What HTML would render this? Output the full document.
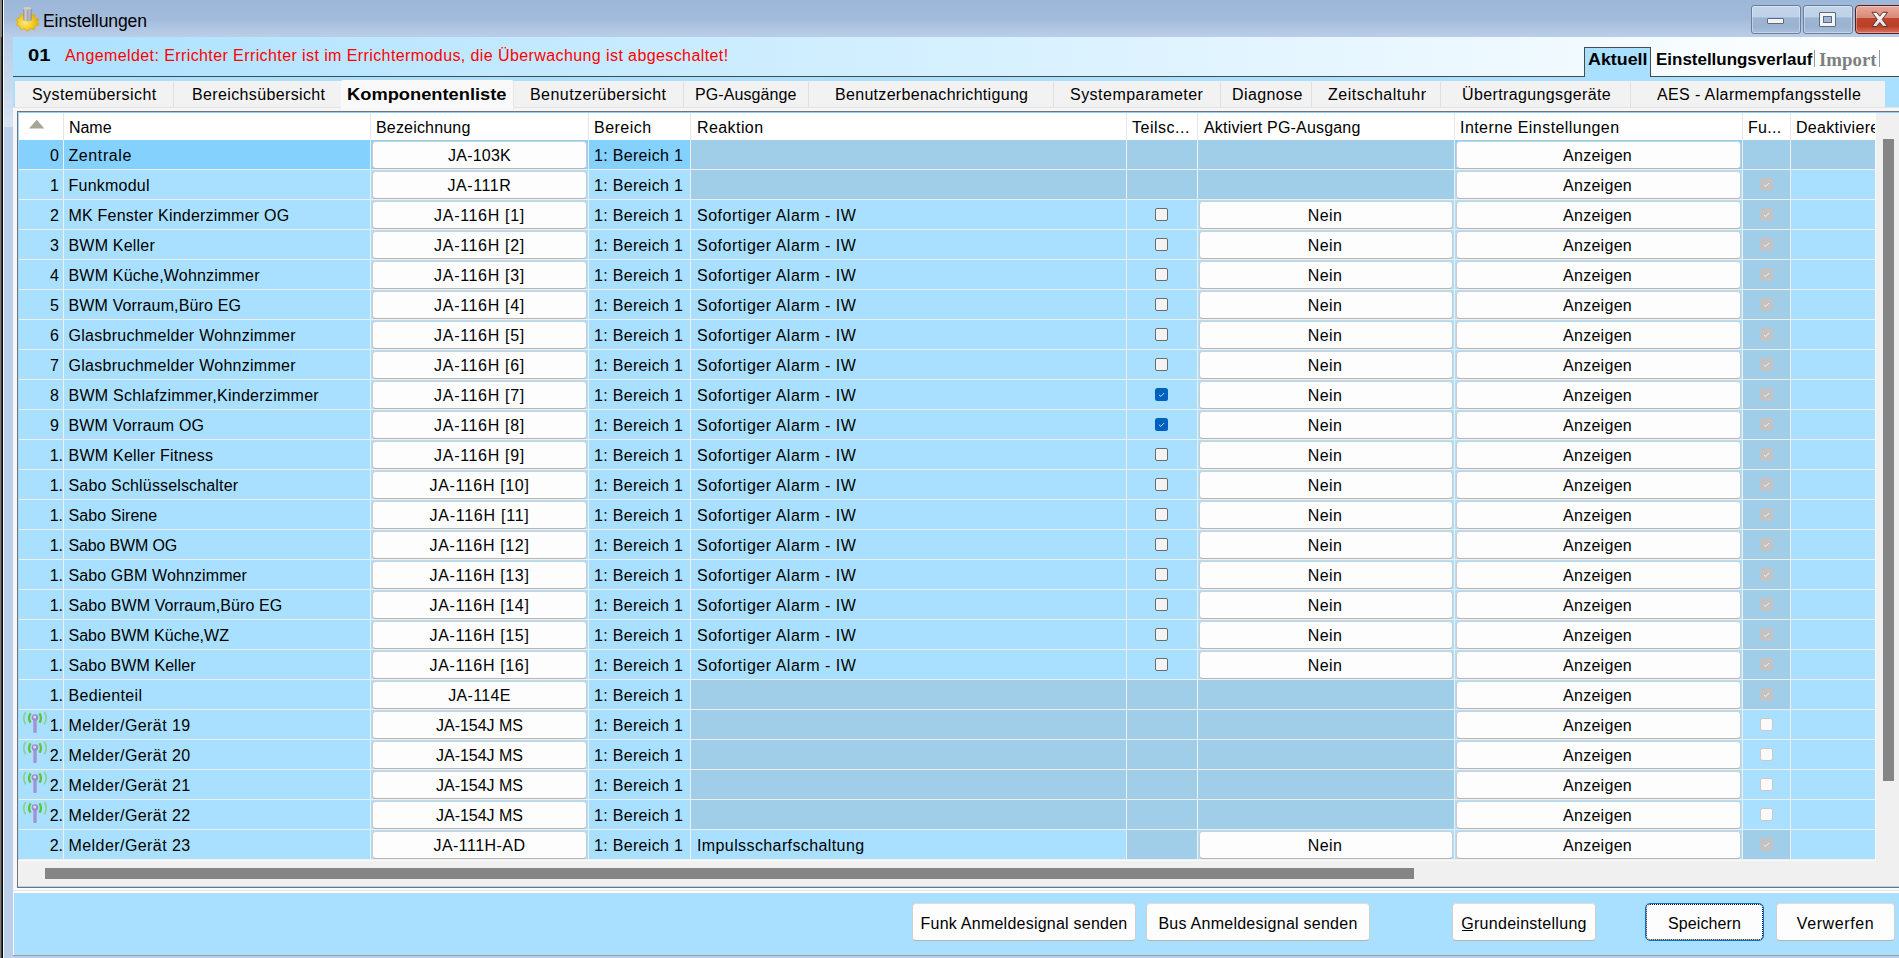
<!DOCTYPE html>
<html><head><meta charset="utf-8"><title>Einstellungen</title>
<style>
html,body{margin:0;padding:0;overflow:hidden;}
body{width:1899px;height:958px;overflow:hidden;position:relative;background:#a9e0ff;font-family:"Liberation Sans", sans-serif;font-size:16px;color:#000;}
div{white-space:nowrap;}
</style></head><body>
<div style="position:absolute;left:0px;top:0px;width:1899px;height:958px;background:#bad0ea;"></div>
<div style="position:absolute;left:0px;top:0px;width:1899px;height:127px;background:linear-gradient(#9db7d8 0px,#a2bbdb 18px,#bacee8 37px,#d6e3f2 126px);"></div>
<div style="position:absolute;left:0px;top:0px;width:1px;height:958px;background:#7e7e7e;"></div>
<div style="position:absolute;left:1px;top:0px;width:1px;height:958px;background:#3a3a3a;"></div>
<div style="position:absolute;left:2px;top:0px;width:1px;height:958px;background:#050505;"></div>
<div style="position:absolute;left:0px;top:0px;width:1px;height:37px;background:#8c8c8c;"></div>
<div style="position:absolute;left:1px;top:0px;width:1px;height:37px;background:#808080;"></div>
<div style="position:absolute;left:3px;top:0px;width:1px;height:958px;background:#fbfcfd;"></div>
<svg style="position:absolute;left:14px;top:5px" width="28" height="28" viewBox="0 0 28 28">
<defs><radialGradient id="gg" cx="0.4" cy="0.55" r="0.65"><stop offset="0" stop-color="#fbe88a"/><stop offset="0.45" stop-color="#f7d128"/><stop offset="1" stop-color="#d3a714"/></radialGradient>
<linearGradient id="cg" x1="0" x2="1"><stop offset="0" stop-color="#8f8f96"/><stop offset="0.28" stop-color="#d2d0d5"/><stop offset="0.5" stop-color="#a6a6ae"/><stop offset="0.75" stop-color="#b9b9c2"/><stop offset="1" stop-color="#8c8c94"/></linearGradient></defs>
<path d="M11.67 9.66 L12.19 8.16 L14.81 8.16 L15.33 9.66 L17.65 10.24 L19.22 9.26 L21.33 10.44 L20.60 11.88 L22.04 13.40 L24.06 13.31 L24.87 15.22 L23.17 16.06 L23.17 17.94 L24.87 18.78 L24.06 20.69 L22.04 20.60 L20.60 22.12 L21.33 23.56 L19.22 24.74 L17.65 23.76 L15.33 24.34 L14.81 25.84 L12.19 25.84 L11.67 24.34 L9.35 23.76 L7.78 24.74 L5.67 23.56 L6.40 22.12 L4.96 20.60 L2.94 20.69 L2.13 18.78 L3.83 17.94 L3.83 16.06 L2.13 15.22 L2.94 13.31 L4.96 13.40 L6.40 11.88 L5.67 10.44 L7.78 9.26 L9.35 10.24 Z" fill="url(#gg)" stroke="#d8ad18" stroke-width="0.7" stroke-linejoin="round"/>
<path d="M9.2 3.2 Q9.2 2 13.5 2 Q17.8 2 17.8 3.2 L17.8 14.6 Q17.8 16.3 13.5 16.3 Q9.2 16.3 9.2 14.6 Z" fill="url(#cg)"/>
<ellipse cx="13.5" cy="3.3" rx="4.3" ry="1.3" fill="#cfcdd2"/>
</svg>
<div style="position:absolute;top:6px;height:30px;line-height:30px;font-size:17.6px;color:#000;white-space:pre;left:43px;letter-spacing:-0.134px;">Einstellungen</div>
<div style="position:absolute;left:1751px;top:5px;width:50px;height:29px;box-sizing:border-box;border:1px solid #6b7f9a;border-radius:3px;background:linear-gradient(#c2d5ea 0%,#bdd1e8 42%,#9db4d2 43%,#9bb3d1 78%,#a9c0dc 100%);box-shadow:inset 0 0 0 1px rgba(255,255,255,0.35)"></div>
<div style="position:absolute;left:1803px;top:5px;width:50px;height:29px;box-sizing:border-box;border:1px solid #6b7f9a;border-radius:3px;background:linear-gradient(#c2d5ea 0%,#bdd1e8 42%,#9db4d2 43%,#9bb3d1 78%,#a9c0dc 100%);box-shadow:inset 0 0 0 1px rgba(255,255,255,0.35)"></div>
<div style="position:absolute;left:1855px;top:5px;width:60px;height:29px;box-sizing:border-box;border:1px solid #5a1f1c;border-radius:4px 0 0 4px;background:linear-gradient(#e8a99b 0%,#d98876 45%,#c0452d 46%,#bb3f27 75%,#d7745f 100%);box-shadow:inset 0 0 0 1px rgba(255,255,255,0.35)"></div>
<div style="position:absolute;left:1767px;top:18px;width:17px;height:6px;box-sizing:border-box;background:#f4f4f4;border:1px solid #5c6a80;border-radius:1px"></div>
<div style="position:absolute;left:1819px;top:12px;width:17px;height:15px;box-sizing:border-box;border:1px solid #5c6a80;background:#f4f4f4;border-radius:1px"></div>
<div style="position:absolute;left:1823px;top:16px;width:9px;height:7px;box-sizing:border-box;border:1px solid #5c6a80;background:#9fb6d4"></div>
<svg style="position:absolute;left:1868px;top:9px" width="24" height="22" viewBox="0 0 24 22"><defs><linearGradient id="xg" x1="0" y1="0" x2="0" y2="1"><stop offset="0" stop-color="#ffffff"/><stop offset="1" stop-color="#dcdcdc"/></linearGradient></defs><path d="M4 3.3 L8.6 3.3 L11.75 7.2 L14.9 3.3 L19.5 3.3 L14.2 10.4 L19.5 17.5 L14.9 17.5 L11.75 13.6 L8.6 17.5 L4 17.5 L9.3 10.4 Z" fill="url(#xg)" stroke="#5d3434" stroke-width="1" stroke-linejoin="round"/></svg>
<div style="position:absolute;left:13px;top:37px;width:1886px;height:39px;background:linear-gradient(90deg,#ace1ff 0%,#ffffff 100%);"></div>
<div style="position:absolute;left:13px;top:76px;width:1886px;height:1px;background:#4a4a4a;"></div>
<div style="position:absolute;left:13px;top:77px;width:1886px;height:881px;background:#a9e0ff;"></div>
<div style="position:absolute;top:41px;height:30px;line-height:30px;font-size:16px;color:#000;white-space:pre;font-weight:bold;left:28px;transform:scaleX(1.2643);transform-origin:0 0;">01</div>
<div style="position:absolute;top:41px;height:30px;line-height:30px;font-size:16px;color:#ff0000;white-space:pre;left:65px;letter-spacing:0.406px;">Angemeldet: Errichter Errichter ist im Errichtermodus, die Überwachung ist abgeschaltet!</div>
<div style="position:absolute;left:1584px;top:47px;width:67px;height:30px;box-sizing:border-box;border:1px solid #4a4a4a;border-bottom:none;background:#a9e0ff"></div>
<div style="position:absolute;top:45px;height:30px;line-height:30px;font-size:16px;color:#000;white-space:pre;font-weight:bold;left:1588px;transform:scaleX(1.1154);transform-origin:0 0;">Aktuell</div>
<div style="position:absolute;top:45px;height:30px;line-height:30px;font-size:16px;color:#000;white-space:pre;font-weight:bold;left:1656px;transform:scaleX(1.0597);transform-origin:0 0;">Einstellungsverlauf</div>
<div style="position:absolute;left:1814px;top:50px;width:1px;height:17px;background:#9a9a9a;"></div>
<div style="position:absolute;top:45px;height:30px;line-height:30px;font-size:18px;color:#7f7f7f;white-space:pre;font-family:'Liberation Serif', serif;font-weight:bold;left:1819px;transform:scaleX(1.0455);transform-origin:0 0;">Import</div>
<div style="position:absolute;left:1879px;top:50px;width:1px;height:17px;background:#9a9a9a;"></div>
<div style="position:absolute;left:15px;top:81px;width:1870px;height:26px;background:#f2f2f2;"></div>
<div style="position:absolute;top:80px;height:30px;line-height:30px;font-size:16px;color:#000;white-space:pre;left:32px;letter-spacing:0.422px;">Systemübersicht</div>
<div style="position:absolute;left:173px;top:82px;width:1px;height:25px;background:#e0e0e0;"></div>
<div style="position:absolute;top:80px;height:30px;line-height:30px;font-size:16px;color:#000;white-space:pre;left:192px;letter-spacing:0.366px;">Bereichsübersicht</div>
<div style="position:absolute;top:80px;height:30px;line-height:30px;font-size:16px;color:#000;white-space:pre;font-weight:bold;left:348px;transform:scaleX(1.1407);transform-origin:0 0;">Komponentenliste</div>
<div style="position:absolute;left:513px;top:82px;width:1px;height:25px;background:#e0e0e0;"></div>
<div style="position:absolute;top:80px;height:30px;line-height:30px;font-size:16px;color:#000;white-space:pre;left:530px;letter-spacing:0.443px;">Benutzerübersicht</div>
<div style="position:absolute;left:683px;top:82px;width:1px;height:25px;background:#e0e0e0;"></div>
<div style="position:absolute;top:80px;height:30px;line-height:30px;font-size:16px;color:#000;white-space:pre;left:695px;letter-spacing:0.099px;">PG-Ausgänge</div>
<div style="position:absolute;left:808px;top:82px;width:1px;height:25px;background:#e0e0e0;"></div>
<div style="position:absolute;top:80px;height:30px;line-height:30px;font-size:16px;color:#000;white-space:pre;left:835px;letter-spacing:0.308px;">Benutzerbenachrichtigung</div>
<div style="position:absolute;left:1053px;top:82px;width:1px;height:25px;background:#e0e0e0;"></div>
<div style="position:absolute;top:80px;height:30px;line-height:30px;font-size:16px;color:#000;white-space:pre;left:1070px;letter-spacing:0.476px;">Systemparameter</div>
<div style="position:absolute;left:1220px;top:82px;width:1px;height:25px;background:#e0e0e0;"></div>
<div style="position:absolute;top:80px;height:30px;line-height:30px;font-size:16px;color:#000;white-space:pre;left:1232px;letter-spacing:0.386px;">Diagnose</div>
<div style="position:absolute;left:1311px;top:82px;width:1px;height:25px;background:#e0e0e0;"></div>
<div style="position:absolute;top:80px;height:30px;line-height:30px;font-size:16px;color:#000;white-space:pre;left:1328px;letter-spacing:0.539px;">Zeitschaltuhr</div>
<div style="position:absolute;left:1440px;top:82px;width:1px;height:25px;background:#e0e0e0;"></div>
<div style="position:absolute;top:80px;height:30px;line-height:30px;font-size:16px;color:#000;white-space:pre;left:1462px;letter-spacing:0.377px;">Übertragungsgeräte</div>
<div style="position:absolute;left:1630px;top:82px;width:1px;height:25px;background:#e0e0e0;"></div>
<div style="position:absolute;top:80px;height:30px;line-height:30px;font-size:16px;color:#000;white-space:pre;left:1657px;letter-spacing:0.378px;">AES - Alarmempfangsstelle</div>
<div style="position:absolute;left:13px;top:107px;width:1886px;height:4px;background:#f6f6f6;"></div>
<div style="position:absolute;left:13px;top:107px;width:4px;height:786px;background:#f7f7f7;"></div>
<div style="position:absolute;left:13px;top:107px;width:1886px;height:1px;background:#e3e3e3;"></div>
<div style="position:absolute;left:341px;top:80px;width:172px;height:30px;background:#f9f9f9;border-radius:2px 2px 0 0;box-shadow:1px 0 0 #e6e6e6;"></div>
<div style="position:absolute;top:80px;height:30px;line-height:30px;font-size:16px;color:#000;white-space:pre;font-weight:bold;left:347px;transform:scaleX(1.1429);transform-origin:0 0;">Komponentenliste</div>
<div style="position:absolute;left:17px;top:111px;width:1882px;height:777px;background:#f0f0f0;box-sizing:border-box;border:1px solid #6f737a;border-right:none;"></div>
<div style="position:absolute;left:18px;top:112px;width:1881px;height:1px;background:#8fd0fb;"></div>
<div style="position:absolute;left:18px;top:112px;width:1px;height:748px;background:#9bdafe;"></div>
<div style="position:absolute;left:18px;top:886px;width:1881px;height:1px;background:#a5d8f5;"></div>
<div style="position:absolute;left:19px;top:113px;width:1857px;height:27px;background:#ffffff;"></div>
<div style="position:absolute;left:63px;top:113px;width:1px;height:27px;background:#e5e5e5;"></div>
<div style="position:absolute;left:370px;top:113px;width:1px;height:27px;background:#e5e5e5;"></div>
<div style="position:absolute;left:588px;top:113px;width:1px;height:27px;background:#e5e5e5;"></div>
<div style="position:absolute;left:690px;top:113px;width:1px;height:27px;background:#e5e5e5;"></div>
<div style="position:absolute;left:1126px;top:113px;width:1px;height:27px;background:#e5e5e5;"></div>
<div style="position:absolute;left:1197px;top:113px;width:1px;height:27px;background:#e5e5e5;"></div>
<div style="position:absolute;left:1454px;top:113px;width:1px;height:27px;background:#e5e5e5;"></div>
<div style="position:absolute;left:1742px;top:113px;width:1px;height:27px;background:#e5e5e5;"></div>
<div style="position:absolute;left:1790px;top:113px;width:1px;height:27px;background:#e5e5e5;"></div>
<div style="position:absolute;top:113px;height:30px;line-height:30px;font-size:16px;color:#000;white-space:pre;left:69px;letter-spacing:-0.047px;">Name</div>
<div style="position:absolute;top:113px;height:30px;line-height:30px;font-size:16px;color:#000;white-space:pre;left:376px;letter-spacing:0.180px;">Bezeichnung</div>
<div style="position:absolute;top:113px;height:30px;line-height:30px;font-size:16px;color:#000;white-space:pre;left:594px;letter-spacing:0.464px;">Bereich</div>
<div style="position:absolute;top:113px;height:30px;line-height:30px;font-size:16px;color:#000;white-space:pre;left:697px;letter-spacing:0.418px;">Reaktion</div>
<div style="position:absolute;top:113px;height:30px;line-height:30px;font-size:16px;color:#000;white-space:pre;left:1132px;letter-spacing:0.517px;">Teilsc...</div>
<div style="position:absolute;top:113px;height:30px;line-height:30px;font-size:16px;color:#000;white-space:pre;left:1204px;letter-spacing:0.177px;">Aktiviert PG-Ausgang</div>
<div style="position:absolute;top:113px;height:30px;line-height:30px;font-size:16px;color:#000;white-space:pre;left:1460px;letter-spacing:0.437px;">Interne Einstellungen</div>
<div style="position:absolute;top:113px;height:30px;line-height:30px;font-size:16px;color:#000;white-space:pre;left:1748px;letter-spacing:0.297px;">Fu...</div>
<div style="position:absolute;top:113px;height:30px;line-height:30px;font-size:16px;color:#000;white-space:pre;left:1796px;letter-spacing:0.315px;width:79px;overflow:hidden;">Deaktiviere</div>
<svg style="position:absolute;left:28px;top:119px" width="18" height="10" viewBox="0 0 18 10"><path d="M1 9.4 L8.7 0.8 L16.4 9.4 Z" fill="#a8a699"/></svg>
<div style="position:absolute;left:19px;top:140px;width:1856px;height:29px;background:#84d1fe;"></div>
<div style="position:absolute;left:19px;top:169px;width:1856px;height:1px;background:#efefef;"></div>
<div style="position:absolute;left:691px;top:140px;width:763px;height:29px;background:#a0cee8;"></div>
<div style="position:absolute;left:1743px;top:140px;width:47px;height:29px;background:#a0cee8;"></div>
<div style="position:absolute;left:1791px;top:140px;width:84px;height:29px;background:#a0cee8;"></div>
<div style="position:absolute;top:141px;height:30px;line-height:30px;font-size:16px;color:#000;white-space:pre;left:19px;width:40px;text-align:right;">0</div>
<div style="position:absolute;top:141px;height:30px;line-height:30px;font-size:16px;color:#000;white-space:pre;left:68.5px;letter-spacing:0.600px;">Zentrale</div>
<div style="position:absolute;left:372px;top:141px;width:215px;height:28px;box-sizing:border-box;background:#fdfdfd;border:1px solid #cfcaca;border-radius:4px;border-top-color:#d4d0d0;border-bottom-color:#b8b5b5"></div>
<div style="position:absolute;top:141px;height:30px;line-height:30px;font-size:16px;color:#000;white-space:pre;left:372px;width:215px;text-align:center;letter-spacing:0.232px;">JA-103K</div>
<div style="position:absolute;top:141px;height:30px;line-height:30px;font-size:16px;color:#000;white-space:pre;left:594px;letter-spacing:0.317px;">1: Bereich 1</div>
<div style="position:absolute;left:1456px;top:141px;width:285px;height:28px;box-sizing:border-box;background:#fdfdfd;border:1px solid #cfcaca;border-radius:4px;border-top-color:#d4d0d0;border-bottom-color:#b8b5b5"></div>
<div style="position:absolute;top:141px;height:30px;line-height:30px;font-size:16px;color:#000;white-space:pre;left:1455px;width:285px;text-align:center;letter-spacing:0.285px;">Anzeigen</div>
<div style="position:absolute;left:19px;top:170px;width:1856px;height:29px;background:#a9e0ff;"></div>
<div style="position:absolute;left:19px;top:199px;width:1856px;height:1px;background:#efefef;"></div>
<div style="position:absolute;left:691px;top:170px;width:763px;height:29px;background:#a0cee8;"></div>
<div style="position:absolute;left:1743px;top:170px;width:47px;height:29px;background:#a0cee8;"></div>
<div style="position:absolute;top:171px;height:30px;line-height:30px;font-size:16px;color:#000;white-space:pre;left:19px;width:40px;text-align:right;">1</div>
<div style="position:absolute;top:171px;height:30px;line-height:30px;font-size:16px;color:#000;white-space:pre;left:68.5px;letter-spacing:0.227px;">Funkmodul</div>
<div style="position:absolute;left:372px;top:171px;width:215px;height:28px;box-sizing:border-box;background:#fdfdfd;border:1px solid #cfcaca;border-radius:4px;border-top-color:#d4d0d0;border-bottom-color:#b8b5b5"></div>
<div style="position:absolute;top:171px;height:30px;line-height:30px;font-size:16px;color:#000;white-space:pre;left:372px;width:215px;text-align:center;letter-spacing:0.589px;">JA-111R</div>
<div style="position:absolute;top:171px;height:30px;line-height:30px;font-size:16px;color:#000;white-space:pre;left:594px;letter-spacing:0.317px;">1: Bereich 1</div>
<div style="position:absolute;left:1456px;top:171px;width:285px;height:28px;box-sizing:border-box;background:#fdfdfd;border:1px solid #cfcaca;border-radius:4px;border-top-color:#d4d0d0;border-bottom-color:#b8b5b5"></div>
<div style="position:absolute;top:171px;height:30px;line-height:30px;font-size:16px;color:#000;white-space:pre;left:1455px;width:285px;text-align:center;letter-spacing:0.285px;">Anzeigen</div>
<div style="position:absolute;left:1760px;top:178px;width:13px;height:13px;background:#c3c3c3;border-radius:2.5px"></div><svg style="position:absolute;left:1760px;top:178px" width="13" height="13" viewBox="0 0 13 13"><path d="M4 6.8 L5.8 8.4 L9.2 5" stroke="#f0f0f0" stroke-width="1" fill="none"/></svg>
<div style="position:absolute;left:19px;top:200px;width:1856px;height:29px;background:#a9e0ff;"></div>
<div style="position:absolute;left:19px;top:229px;width:1856px;height:1px;background:#efefef;"></div>
<div style="position:absolute;left:1743px;top:200px;width:47px;height:29px;background:#a0cee8;"></div>
<div style="position:absolute;top:201px;height:30px;line-height:30px;font-size:16px;color:#000;white-space:pre;left:19px;width:40px;text-align:right;">2</div>
<div style="position:absolute;top:201px;height:30px;line-height:30px;font-size:16px;color:#000;white-space:pre;left:68.5px;letter-spacing:0.217px;">MK Fenster Kinderzimmer OG</div>
<div style="position:absolute;left:372px;top:201px;width:215px;height:28px;box-sizing:border-box;background:#fdfdfd;border:1px solid #cfcaca;border-radius:4px;border-top-color:#d4d0d0;border-bottom-color:#b8b5b5"></div>
<div style="position:absolute;top:201px;height:30px;line-height:30px;font-size:16px;color:#000;white-space:pre;left:372px;width:215px;text-align:center;letter-spacing:0.682px;">JA-116H [1]</div>
<div style="position:absolute;top:201px;height:30px;line-height:30px;font-size:16px;color:#000;white-space:pre;left:594px;letter-spacing:0.317px;">1: Bereich 1</div>
<div style="position:absolute;top:201px;height:30px;line-height:30px;font-size:16px;color:#000;white-space:pre;left:697px;letter-spacing:0.520px;">Sofortiger Alarm - IW</div>
<div style="position:absolute;left:1155px;top:208px;width:13px;height:13px;box-sizing:border-box;background:#f3f3f3;border:1px solid #6b6b6b;border-radius:2px"></div>
<div style="position:absolute;left:1199px;top:201px;width:254px;height:28px;box-sizing:border-box;background:#fdfdfd;border:1px solid #cfcaca;border-radius:4px;border-top-color:#d4d0d0;border-bottom-color:#b8b5b5"></div>
<div style="position:absolute;top:201px;height:30px;line-height:30px;font-size:16px;color:#000;white-space:pre;left:1198px;width:254px;text-align:center;letter-spacing:0.448px;">Nein</div>
<div style="position:absolute;left:1456px;top:201px;width:285px;height:28px;box-sizing:border-box;background:#fdfdfd;border:1px solid #cfcaca;border-radius:4px;border-top-color:#d4d0d0;border-bottom-color:#b8b5b5"></div>
<div style="position:absolute;top:201px;height:30px;line-height:30px;font-size:16px;color:#000;white-space:pre;left:1455px;width:285px;text-align:center;letter-spacing:0.285px;">Anzeigen</div>
<div style="position:absolute;left:1760px;top:208px;width:13px;height:13px;background:#c3c3c3;border-radius:2.5px"></div><svg style="position:absolute;left:1760px;top:208px" width="13" height="13" viewBox="0 0 13 13"><path d="M4 6.8 L5.8 8.4 L9.2 5" stroke="#f0f0f0" stroke-width="1" fill="none"/></svg>
<div style="position:absolute;left:19px;top:230px;width:1856px;height:29px;background:#a9e0ff;"></div>
<div style="position:absolute;left:19px;top:259px;width:1856px;height:1px;background:#efefef;"></div>
<div style="position:absolute;left:1743px;top:230px;width:47px;height:29px;background:#a0cee8;"></div>
<div style="position:absolute;top:231px;height:30px;line-height:30px;font-size:16px;color:#000;white-space:pre;left:19px;width:40px;text-align:right;">3</div>
<div style="position:absolute;top:231px;height:30px;line-height:30px;font-size:16px;color:#000;white-space:pre;left:68.5px;letter-spacing:0.195px;">BWM Keller</div>
<div style="position:absolute;left:372px;top:231px;width:215px;height:28px;box-sizing:border-box;background:#fdfdfd;border:1px solid #cfcaca;border-radius:4px;border-top-color:#d4d0d0;border-bottom-color:#b8b5b5"></div>
<div style="position:absolute;top:231px;height:30px;line-height:30px;font-size:16px;color:#000;white-space:pre;left:372px;width:215px;text-align:center;letter-spacing:0.682px;">JA-116H [2]</div>
<div style="position:absolute;top:231px;height:30px;line-height:30px;font-size:16px;color:#000;white-space:pre;left:594px;letter-spacing:0.317px;">1: Bereich 1</div>
<div style="position:absolute;top:231px;height:30px;line-height:30px;font-size:16px;color:#000;white-space:pre;left:697px;letter-spacing:0.520px;">Sofortiger Alarm - IW</div>
<div style="position:absolute;left:1155px;top:238px;width:13px;height:13px;box-sizing:border-box;background:#f3f3f3;border:1px solid #6b6b6b;border-radius:2px"></div>
<div style="position:absolute;left:1199px;top:231px;width:254px;height:28px;box-sizing:border-box;background:#fdfdfd;border:1px solid #cfcaca;border-radius:4px;border-top-color:#d4d0d0;border-bottom-color:#b8b5b5"></div>
<div style="position:absolute;top:231px;height:30px;line-height:30px;font-size:16px;color:#000;white-space:pre;left:1198px;width:254px;text-align:center;letter-spacing:0.448px;">Nein</div>
<div style="position:absolute;left:1456px;top:231px;width:285px;height:28px;box-sizing:border-box;background:#fdfdfd;border:1px solid #cfcaca;border-radius:4px;border-top-color:#d4d0d0;border-bottom-color:#b8b5b5"></div>
<div style="position:absolute;top:231px;height:30px;line-height:30px;font-size:16px;color:#000;white-space:pre;left:1455px;width:285px;text-align:center;letter-spacing:0.285px;">Anzeigen</div>
<div style="position:absolute;left:1760px;top:238px;width:13px;height:13px;background:#c3c3c3;border-radius:2.5px"></div><svg style="position:absolute;left:1760px;top:238px" width="13" height="13" viewBox="0 0 13 13"><path d="M4 6.8 L5.8 8.4 L9.2 5" stroke="#f0f0f0" stroke-width="1" fill="none"/></svg>
<div style="position:absolute;left:19px;top:260px;width:1856px;height:29px;background:#a9e0ff;"></div>
<div style="position:absolute;left:19px;top:289px;width:1856px;height:1px;background:#efefef;"></div>
<div style="position:absolute;left:1743px;top:260px;width:47px;height:29px;background:#a0cee8;"></div>
<div style="position:absolute;top:261px;height:30px;line-height:30px;font-size:16px;color:#000;white-space:pre;left:19px;width:40px;text-align:right;">4</div>
<div style="position:absolute;top:261px;height:30px;line-height:30px;font-size:16px;color:#000;white-space:pre;left:68.5px;letter-spacing:0.194px;">BWM Küche,Wohnzimmer</div>
<div style="position:absolute;left:372px;top:261px;width:215px;height:28px;box-sizing:border-box;background:#fdfdfd;border:1px solid #cfcaca;border-radius:4px;border-top-color:#d4d0d0;border-bottom-color:#b8b5b5"></div>
<div style="position:absolute;top:261px;height:30px;line-height:30px;font-size:16px;color:#000;white-space:pre;left:372px;width:215px;text-align:center;letter-spacing:0.682px;">JA-116H [3]</div>
<div style="position:absolute;top:261px;height:30px;line-height:30px;font-size:16px;color:#000;white-space:pre;left:594px;letter-spacing:0.317px;">1: Bereich 1</div>
<div style="position:absolute;top:261px;height:30px;line-height:30px;font-size:16px;color:#000;white-space:pre;left:697px;letter-spacing:0.520px;">Sofortiger Alarm - IW</div>
<div style="position:absolute;left:1155px;top:268px;width:13px;height:13px;box-sizing:border-box;background:#f3f3f3;border:1px solid #6b6b6b;border-radius:2px"></div>
<div style="position:absolute;left:1199px;top:261px;width:254px;height:28px;box-sizing:border-box;background:#fdfdfd;border:1px solid #cfcaca;border-radius:4px;border-top-color:#d4d0d0;border-bottom-color:#b8b5b5"></div>
<div style="position:absolute;top:261px;height:30px;line-height:30px;font-size:16px;color:#000;white-space:pre;left:1198px;width:254px;text-align:center;letter-spacing:0.448px;">Nein</div>
<div style="position:absolute;left:1456px;top:261px;width:285px;height:28px;box-sizing:border-box;background:#fdfdfd;border:1px solid #cfcaca;border-radius:4px;border-top-color:#d4d0d0;border-bottom-color:#b8b5b5"></div>
<div style="position:absolute;top:261px;height:30px;line-height:30px;font-size:16px;color:#000;white-space:pre;left:1455px;width:285px;text-align:center;letter-spacing:0.285px;">Anzeigen</div>
<div style="position:absolute;left:1760px;top:268px;width:13px;height:13px;background:#c3c3c3;border-radius:2.5px"></div><svg style="position:absolute;left:1760px;top:268px" width="13" height="13" viewBox="0 0 13 13"><path d="M4 6.8 L5.8 8.4 L9.2 5" stroke="#f0f0f0" stroke-width="1" fill="none"/></svg>
<div style="position:absolute;left:19px;top:290px;width:1856px;height:29px;background:#a9e0ff;"></div>
<div style="position:absolute;left:19px;top:319px;width:1856px;height:1px;background:#efefef;"></div>
<div style="position:absolute;left:1743px;top:290px;width:47px;height:29px;background:#a0cee8;"></div>
<div style="position:absolute;top:291px;height:30px;line-height:30px;font-size:16px;color:#000;white-space:pre;left:19px;width:40px;text-align:right;">5</div>
<div style="position:absolute;top:291px;height:30px;line-height:30px;font-size:16px;color:#000;white-space:pre;left:68.5px;letter-spacing:0.146px;">BWM Vorraum,Büro EG</div>
<div style="position:absolute;left:372px;top:291px;width:215px;height:28px;box-sizing:border-box;background:#fdfdfd;border:1px solid #cfcaca;border-radius:4px;border-top-color:#d4d0d0;border-bottom-color:#b8b5b5"></div>
<div style="position:absolute;top:291px;height:30px;line-height:30px;font-size:16px;color:#000;white-space:pre;left:372px;width:215px;text-align:center;letter-spacing:0.682px;">JA-116H [4]</div>
<div style="position:absolute;top:291px;height:30px;line-height:30px;font-size:16px;color:#000;white-space:pre;left:594px;letter-spacing:0.317px;">1: Bereich 1</div>
<div style="position:absolute;top:291px;height:30px;line-height:30px;font-size:16px;color:#000;white-space:pre;left:697px;letter-spacing:0.520px;">Sofortiger Alarm - IW</div>
<div style="position:absolute;left:1155px;top:298px;width:13px;height:13px;box-sizing:border-box;background:#f3f3f3;border:1px solid #6b6b6b;border-radius:2px"></div>
<div style="position:absolute;left:1199px;top:291px;width:254px;height:28px;box-sizing:border-box;background:#fdfdfd;border:1px solid #cfcaca;border-radius:4px;border-top-color:#d4d0d0;border-bottom-color:#b8b5b5"></div>
<div style="position:absolute;top:291px;height:30px;line-height:30px;font-size:16px;color:#000;white-space:pre;left:1198px;width:254px;text-align:center;letter-spacing:0.448px;">Nein</div>
<div style="position:absolute;left:1456px;top:291px;width:285px;height:28px;box-sizing:border-box;background:#fdfdfd;border:1px solid #cfcaca;border-radius:4px;border-top-color:#d4d0d0;border-bottom-color:#b8b5b5"></div>
<div style="position:absolute;top:291px;height:30px;line-height:30px;font-size:16px;color:#000;white-space:pre;left:1455px;width:285px;text-align:center;letter-spacing:0.285px;">Anzeigen</div>
<div style="position:absolute;left:1760px;top:298px;width:13px;height:13px;background:#c3c3c3;border-radius:2.5px"></div><svg style="position:absolute;left:1760px;top:298px" width="13" height="13" viewBox="0 0 13 13"><path d="M4 6.8 L5.8 8.4 L9.2 5" stroke="#f0f0f0" stroke-width="1" fill="none"/></svg>
<div style="position:absolute;left:19px;top:320px;width:1856px;height:29px;background:#a9e0ff;"></div>
<div style="position:absolute;left:19px;top:349px;width:1856px;height:1px;background:#efefef;"></div>
<div style="position:absolute;left:1743px;top:320px;width:47px;height:29px;background:#a0cee8;"></div>
<div style="position:absolute;top:321px;height:30px;line-height:30px;font-size:16px;color:#000;white-space:pre;left:19px;width:40px;text-align:right;">6</div>
<div style="position:absolute;top:321px;height:30px;line-height:30px;font-size:16px;color:#000;white-space:pre;left:68.5px;letter-spacing:0.272px;">Glasbruchmelder Wohnzimmer</div>
<div style="position:absolute;left:372px;top:321px;width:215px;height:28px;box-sizing:border-box;background:#fdfdfd;border:1px solid #cfcaca;border-radius:4px;border-top-color:#d4d0d0;border-bottom-color:#b8b5b5"></div>
<div style="position:absolute;top:321px;height:30px;line-height:30px;font-size:16px;color:#000;white-space:pre;left:372px;width:215px;text-align:center;letter-spacing:0.682px;">JA-116H [5]</div>
<div style="position:absolute;top:321px;height:30px;line-height:30px;font-size:16px;color:#000;white-space:pre;left:594px;letter-spacing:0.317px;">1: Bereich 1</div>
<div style="position:absolute;top:321px;height:30px;line-height:30px;font-size:16px;color:#000;white-space:pre;left:697px;letter-spacing:0.520px;">Sofortiger Alarm - IW</div>
<div style="position:absolute;left:1155px;top:328px;width:13px;height:13px;box-sizing:border-box;background:#f3f3f3;border:1px solid #6b6b6b;border-radius:2px"></div>
<div style="position:absolute;left:1199px;top:321px;width:254px;height:28px;box-sizing:border-box;background:#fdfdfd;border:1px solid #cfcaca;border-radius:4px;border-top-color:#d4d0d0;border-bottom-color:#b8b5b5"></div>
<div style="position:absolute;top:321px;height:30px;line-height:30px;font-size:16px;color:#000;white-space:pre;left:1198px;width:254px;text-align:center;letter-spacing:0.448px;">Nein</div>
<div style="position:absolute;left:1456px;top:321px;width:285px;height:28px;box-sizing:border-box;background:#fdfdfd;border:1px solid #cfcaca;border-radius:4px;border-top-color:#d4d0d0;border-bottom-color:#b8b5b5"></div>
<div style="position:absolute;top:321px;height:30px;line-height:30px;font-size:16px;color:#000;white-space:pre;left:1455px;width:285px;text-align:center;letter-spacing:0.285px;">Anzeigen</div>
<div style="position:absolute;left:1760px;top:328px;width:13px;height:13px;background:#c3c3c3;border-radius:2.5px"></div><svg style="position:absolute;left:1760px;top:328px" width="13" height="13" viewBox="0 0 13 13"><path d="M4 6.8 L5.8 8.4 L9.2 5" stroke="#f0f0f0" stroke-width="1" fill="none"/></svg>
<div style="position:absolute;left:19px;top:350px;width:1856px;height:29px;background:#a9e0ff;"></div>
<div style="position:absolute;left:19px;top:379px;width:1856px;height:1px;background:#efefef;"></div>
<div style="position:absolute;left:1743px;top:350px;width:47px;height:29px;background:#a0cee8;"></div>
<div style="position:absolute;top:351px;height:30px;line-height:30px;font-size:16px;color:#000;white-space:pre;left:19px;width:40px;text-align:right;">7</div>
<div style="position:absolute;top:351px;height:30px;line-height:30px;font-size:16px;color:#000;white-space:pre;left:68.5px;letter-spacing:0.272px;">Glasbruchmelder Wohnzimmer</div>
<div style="position:absolute;left:372px;top:351px;width:215px;height:28px;box-sizing:border-box;background:#fdfdfd;border:1px solid #cfcaca;border-radius:4px;border-top-color:#d4d0d0;border-bottom-color:#b8b5b5"></div>
<div style="position:absolute;top:351px;height:30px;line-height:30px;font-size:16px;color:#000;white-space:pre;left:372px;width:215px;text-align:center;letter-spacing:0.682px;">JA-116H [6]</div>
<div style="position:absolute;top:351px;height:30px;line-height:30px;font-size:16px;color:#000;white-space:pre;left:594px;letter-spacing:0.317px;">1: Bereich 1</div>
<div style="position:absolute;top:351px;height:30px;line-height:30px;font-size:16px;color:#000;white-space:pre;left:697px;letter-spacing:0.520px;">Sofortiger Alarm - IW</div>
<div style="position:absolute;left:1155px;top:358px;width:13px;height:13px;box-sizing:border-box;background:#f3f3f3;border:1px solid #6b6b6b;border-radius:2px"></div>
<div style="position:absolute;left:1199px;top:351px;width:254px;height:28px;box-sizing:border-box;background:#fdfdfd;border:1px solid #cfcaca;border-radius:4px;border-top-color:#d4d0d0;border-bottom-color:#b8b5b5"></div>
<div style="position:absolute;top:351px;height:30px;line-height:30px;font-size:16px;color:#000;white-space:pre;left:1198px;width:254px;text-align:center;letter-spacing:0.448px;">Nein</div>
<div style="position:absolute;left:1456px;top:351px;width:285px;height:28px;box-sizing:border-box;background:#fdfdfd;border:1px solid #cfcaca;border-radius:4px;border-top-color:#d4d0d0;border-bottom-color:#b8b5b5"></div>
<div style="position:absolute;top:351px;height:30px;line-height:30px;font-size:16px;color:#000;white-space:pre;left:1455px;width:285px;text-align:center;letter-spacing:0.285px;">Anzeigen</div>
<div style="position:absolute;left:1760px;top:358px;width:13px;height:13px;background:#c3c3c3;border-radius:2.5px"></div><svg style="position:absolute;left:1760px;top:358px" width="13" height="13" viewBox="0 0 13 13"><path d="M4 6.8 L5.8 8.4 L9.2 5" stroke="#f0f0f0" stroke-width="1" fill="none"/></svg>
<div style="position:absolute;left:19px;top:380px;width:1856px;height:29px;background:#a9e0ff;"></div>
<div style="position:absolute;left:19px;top:409px;width:1856px;height:1px;background:#efefef;"></div>
<div style="position:absolute;left:1743px;top:380px;width:47px;height:29px;background:#a0cee8;"></div>
<div style="position:absolute;top:381px;height:30px;line-height:30px;font-size:16px;color:#000;white-space:pre;left:19px;width:40px;text-align:right;">8</div>
<div style="position:absolute;top:381px;height:30px;line-height:30px;font-size:16px;color:#000;white-space:pre;left:68.5px;letter-spacing:0.265px;">BWM Schlafzimmer,Kinderzimmer</div>
<div style="position:absolute;left:372px;top:381px;width:215px;height:28px;box-sizing:border-box;background:#fdfdfd;border:1px solid #cfcaca;border-radius:4px;border-top-color:#d4d0d0;border-bottom-color:#b8b5b5"></div>
<div style="position:absolute;top:381px;height:30px;line-height:30px;font-size:16px;color:#000;white-space:pre;left:372px;width:215px;text-align:center;letter-spacing:0.682px;">JA-116H [7]</div>
<div style="position:absolute;top:381px;height:30px;line-height:30px;font-size:16px;color:#000;white-space:pre;left:594px;letter-spacing:0.317px;">1: Bereich 1</div>
<div style="position:absolute;top:381px;height:30px;line-height:30px;font-size:16px;color:#000;white-space:pre;left:697px;letter-spacing:0.520px;">Sofortiger Alarm - IW</div>
<div style="position:absolute;left:1155px;top:388px;width:13px;height:13px;background:#0060c0;border-radius:2.5px"></div><svg style="position:absolute;left:1155px;top:388px" width="13" height="13" viewBox="0 0 13 13"><path d="M4 6.8 L5.8 8.4 L9.2 5" stroke="#fff" stroke-width="0.9" stroke-opacity="0.9" fill="none"/></svg>
<div style="position:absolute;left:1199px;top:381px;width:254px;height:28px;box-sizing:border-box;background:#fdfdfd;border:1px solid #cfcaca;border-radius:4px;border-top-color:#d4d0d0;border-bottom-color:#b8b5b5"></div>
<div style="position:absolute;top:381px;height:30px;line-height:30px;font-size:16px;color:#000;white-space:pre;left:1198px;width:254px;text-align:center;letter-spacing:0.448px;">Nein</div>
<div style="position:absolute;left:1456px;top:381px;width:285px;height:28px;box-sizing:border-box;background:#fdfdfd;border:1px solid #cfcaca;border-radius:4px;border-top-color:#d4d0d0;border-bottom-color:#b8b5b5"></div>
<div style="position:absolute;top:381px;height:30px;line-height:30px;font-size:16px;color:#000;white-space:pre;left:1455px;width:285px;text-align:center;letter-spacing:0.285px;">Anzeigen</div>
<div style="position:absolute;left:1760px;top:388px;width:13px;height:13px;background:#c3c3c3;border-radius:2.5px"></div><svg style="position:absolute;left:1760px;top:388px" width="13" height="13" viewBox="0 0 13 13"><path d="M4 6.8 L5.8 8.4 L9.2 5" stroke="#f0f0f0" stroke-width="1" fill="none"/></svg>
<div style="position:absolute;left:19px;top:410px;width:1856px;height:29px;background:#a9e0ff;"></div>
<div style="position:absolute;left:19px;top:439px;width:1856px;height:1px;background:#efefef;"></div>
<div style="position:absolute;left:1743px;top:410px;width:47px;height:29px;background:#a0cee8;"></div>
<div style="position:absolute;top:411px;height:30px;line-height:30px;font-size:16px;color:#000;white-space:pre;left:19px;width:40px;text-align:right;">9</div>
<div style="position:absolute;top:411px;height:30px;line-height:30px;font-size:16px;color:#000;white-space:pre;left:68.5px;letter-spacing:0.167px;">BWM Vorraum OG</div>
<div style="position:absolute;left:372px;top:411px;width:215px;height:28px;box-sizing:border-box;background:#fdfdfd;border:1px solid #cfcaca;border-radius:4px;border-top-color:#d4d0d0;border-bottom-color:#b8b5b5"></div>
<div style="position:absolute;top:411px;height:30px;line-height:30px;font-size:16px;color:#000;white-space:pre;left:372px;width:215px;text-align:center;letter-spacing:0.682px;">JA-116H [8]</div>
<div style="position:absolute;top:411px;height:30px;line-height:30px;font-size:16px;color:#000;white-space:pre;left:594px;letter-spacing:0.317px;">1: Bereich 1</div>
<div style="position:absolute;top:411px;height:30px;line-height:30px;font-size:16px;color:#000;white-space:pre;left:697px;letter-spacing:0.520px;">Sofortiger Alarm - IW</div>
<div style="position:absolute;left:1155px;top:418px;width:13px;height:13px;background:#0060c0;border-radius:2.5px"></div><svg style="position:absolute;left:1155px;top:418px" width="13" height="13" viewBox="0 0 13 13"><path d="M4 6.8 L5.8 8.4 L9.2 5" stroke="#fff" stroke-width="0.9" stroke-opacity="0.9" fill="none"/></svg>
<div style="position:absolute;left:1199px;top:411px;width:254px;height:28px;box-sizing:border-box;background:#fdfdfd;border:1px solid #cfcaca;border-radius:4px;border-top-color:#d4d0d0;border-bottom-color:#b8b5b5"></div>
<div style="position:absolute;top:411px;height:30px;line-height:30px;font-size:16px;color:#000;white-space:pre;left:1198px;width:254px;text-align:center;letter-spacing:0.448px;">Nein</div>
<div style="position:absolute;left:1456px;top:411px;width:285px;height:28px;box-sizing:border-box;background:#fdfdfd;border:1px solid #cfcaca;border-radius:4px;border-top-color:#d4d0d0;border-bottom-color:#b8b5b5"></div>
<div style="position:absolute;top:411px;height:30px;line-height:30px;font-size:16px;color:#000;white-space:pre;left:1455px;width:285px;text-align:center;letter-spacing:0.285px;">Anzeigen</div>
<div style="position:absolute;left:1760px;top:418px;width:13px;height:13px;background:#c3c3c3;border-radius:2.5px"></div><svg style="position:absolute;left:1760px;top:418px" width="13" height="13" viewBox="0 0 13 13"><path d="M4 6.8 L5.8 8.4 L9.2 5" stroke="#f0f0f0" stroke-width="1" fill="none"/></svg>
<div style="position:absolute;left:19px;top:440px;width:1856px;height:29px;background:#a9e0ff;"></div>
<div style="position:absolute;left:19px;top:469px;width:1856px;height:1px;background:#efefef;"></div>
<div style="position:absolute;left:1743px;top:440px;width:47px;height:29px;background:#a0cee8;"></div>
<div style="position:absolute;top:441px;height:30px;line-height:30px;font-size:16px;color:#000;white-space:pre;left:19px;width:44px;text-align:right;">1.</div>
<div style="position:absolute;top:441px;height:30px;line-height:30px;font-size:16px;color:#000;white-space:pre;left:68.5px;letter-spacing:0.235px;">BWM Keller Fitness</div>
<div style="position:absolute;left:372px;top:441px;width:215px;height:28px;box-sizing:border-box;background:#fdfdfd;border:1px solid #cfcaca;border-radius:4px;border-top-color:#d4d0d0;border-bottom-color:#b8b5b5"></div>
<div style="position:absolute;top:441px;height:30px;line-height:30px;font-size:16px;color:#000;white-space:pre;left:372px;width:215px;text-align:center;letter-spacing:0.682px;">JA-116H [9]</div>
<div style="position:absolute;top:441px;height:30px;line-height:30px;font-size:16px;color:#000;white-space:pre;left:594px;letter-spacing:0.317px;">1: Bereich 1</div>
<div style="position:absolute;top:441px;height:30px;line-height:30px;font-size:16px;color:#000;white-space:pre;left:697px;letter-spacing:0.520px;">Sofortiger Alarm - IW</div>
<div style="position:absolute;left:1155px;top:448px;width:13px;height:13px;box-sizing:border-box;background:#f3f3f3;border:1px solid #6b6b6b;border-radius:2px"></div>
<div style="position:absolute;left:1199px;top:441px;width:254px;height:28px;box-sizing:border-box;background:#fdfdfd;border:1px solid #cfcaca;border-radius:4px;border-top-color:#d4d0d0;border-bottom-color:#b8b5b5"></div>
<div style="position:absolute;top:441px;height:30px;line-height:30px;font-size:16px;color:#000;white-space:pre;left:1198px;width:254px;text-align:center;letter-spacing:0.448px;">Nein</div>
<div style="position:absolute;left:1456px;top:441px;width:285px;height:28px;box-sizing:border-box;background:#fdfdfd;border:1px solid #cfcaca;border-radius:4px;border-top-color:#d4d0d0;border-bottom-color:#b8b5b5"></div>
<div style="position:absolute;top:441px;height:30px;line-height:30px;font-size:16px;color:#000;white-space:pre;left:1455px;width:285px;text-align:center;letter-spacing:0.285px;">Anzeigen</div>
<div style="position:absolute;left:1760px;top:448px;width:13px;height:13px;background:#c3c3c3;border-radius:2.5px"></div><svg style="position:absolute;left:1760px;top:448px" width="13" height="13" viewBox="0 0 13 13"><path d="M4 6.8 L5.8 8.4 L9.2 5" stroke="#f0f0f0" stroke-width="1" fill="none"/></svg>
<div style="position:absolute;left:19px;top:470px;width:1856px;height:29px;background:#a9e0ff;"></div>
<div style="position:absolute;left:19px;top:499px;width:1856px;height:1px;background:#efefef;"></div>
<div style="position:absolute;left:1743px;top:470px;width:47px;height:29px;background:#a0cee8;"></div>
<div style="position:absolute;top:471px;height:30px;line-height:30px;font-size:16px;color:#000;white-space:pre;left:19px;width:44px;text-align:right;">1.</div>
<div style="position:absolute;top:471px;height:30px;line-height:30px;font-size:16px;color:#000;white-space:pre;left:68.5px;letter-spacing:0.154px;">Sabo Schlüsselschalter</div>
<div style="position:absolute;left:372px;top:471px;width:215px;height:28px;box-sizing:border-box;background:#fdfdfd;border:1px solid #cfcaca;border-radius:4px;border-top-color:#d4d0d0;border-bottom-color:#b8b5b5"></div>
<div style="position:absolute;top:471px;height:30px;line-height:30px;font-size:16px;color:#000;white-space:pre;left:372px;width:215px;text-align:center;letter-spacing:0.650px;">JA-116H [10]</div>
<div style="position:absolute;top:471px;height:30px;line-height:30px;font-size:16px;color:#000;white-space:pre;left:594px;letter-spacing:0.317px;">1: Bereich 1</div>
<div style="position:absolute;top:471px;height:30px;line-height:30px;font-size:16px;color:#000;white-space:pre;left:697px;letter-spacing:0.520px;">Sofortiger Alarm - IW</div>
<div style="position:absolute;left:1155px;top:478px;width:13px;height:13px;box-sizing:border-box;background:#f3f3f3;border:1px solid #6b6b6b;border-radius:2px"></div>
<div style="position:absolute;left:1199px;top:471px;width:254px;height:28px;box-sizing:border-box;background:#fdfdfd;border:1px solid #cfcaca;border-radius:4px;border-top-color:#d4d0d0;border-bottom-color:#b8b5b5"></div>
<div style="position:absolute;top:471px;height:30px;line-height:30px;font-size:16px;color:#000;white-space:pre;left:1198px;width:254px;text-align:center;letter-spacing:0.448px;">Nein</div>
<div style="position:absolute;left:1456px;top:471px;width:285px;height:28px;box-sizing:border-box;background:#fdfdfd;border:1px solid #cfcaca;border-radius:4px;border-top-color:#d4d0d0;border-bottom-color:#b8b5b5"></div>
<div style="position:absolute;top:471px;height:30px;line-height:30px;font-size:16px;color:#000;white-space:pre;left:1455px;width:285px;text-align:center;letter-spacing:0.285px;">Anzeigen</div>
<div style="position:absolute;left:1760px;top:478px;width:13px;height:13px;background:#c3c3c3;border-radius:2.5px"></div><svg style="position:absolute;left:1760px;top:478px" width="13" height="13" viewBox="0 0 13 13"><path d="M4 6.8 L5.8 8.4 L9.2 5" stroke="#f0f0f0" stroke-width="1" fill="none"/></svg>
<div style="position:absolute;left:19px;top:500px;width:1856px;height:29px;background:#a9e0ff;"></div>
<div style="position:absolute;left:19px;top:529px;width:1856px;height:1px;background:#efefef;"></div>
<div style="position:absolute;left:1743px;top:500px;width:47px;height:29px;background:#a0cee8;"></div>
<div style="position:absolute;top:501px;height:30px;line-height:30px;font-size:16px;color:#000;white-space:pre;left:19px;width:44px;text-align:right;">1.</div>
<div style="position:absolute;top:501px;height:30px;line-height:30px;font-size:16px;color:#000;white-space:pre;left:68.5px;letter-spacing:0.067px;">Sabo Sirene</div>
<div style="position:absolute;left:372px;top:501px;width:215px;height:28px;box-sizing:border-box;background:#fdfdfd;border:1px solid #cfcaca;border-radius:4px;border-top-color:#d4d0d0;border-bottom-color:#b8b5b5"></div>
<div style="position:absolute;top:501px;height:30px;line-height:30px;font-size:16px;color:#000;white-space:pre;left:372px;width:215px;text-align:center;letter-spacing:0.749px;">JA-116H [11]</div>
<div style="position:absolute;top:501px;height:30px;line-height:30px;font-size:16px;color:#000;white-space:pre;left:594px;letter-spacing:0.317px;">1: Bereich 1</div>
<div style="position:absolute;top:501px;height:30px;line-height:30px;font-size:16px;color:#000;white-space:pre;left:697px;letter-spacing:0.520px;">Sofortiger Alarm - IW</div>
<div style="position:absolute;left:1155px;top:508px;width:13px;height:13px;box-sizing:border-box;background:#f3f3f3;border:1px solid #6b6b6b;border-radius:2px"></div>
<div style="position:absolute;left:1199px;top:501px;width:254px;height:28px;box-sizing:border-box;background:#fdfdfd;border:1px solid #cfcaca;border-radius:4px;border-top-color:#d4d0d0;border-bottom-color:#b8b5b5"></div>
<div style="position:absolute;top:501px;height:30px;line-height:30px;font-size:16px;color:#000;white-space:pre;left:1198px;width:254px;text-align:center;letter-spacing:0.448px;">Nein</div>
<div style="position:absolute;left:1456px;top:501px;width:285px;height:28px;box-sizing:border-box;background:#fdfdfd;border:1px solid #cfcaca;border-radius:4px;border-top-color:#d4d0d0;border-bottom-color:#b8b5b5"></div>
<div style="position:absolute;top:501px;height:30px;line-height:30px;font-size:16px;color:#000;white-space:pre;left:1455px;width:285px;text-align:center;letter-spacing:0.285px;">Anzeigen</div>
<div style="position:absolute;left:1760px;top:508px;width:13px;height:13px;background:#c3c3c3;border-radius:2.5px"></div><svg style="position:absolute;left:1760px;top:508px" width="13" height="13" viewBox="0 0 13 13"><path d="M4 6.8 L5.8 8.4 L9.2 5" stroke="#f0f0f0" stroke-width="1" fill="none"/></svg>
<div style="position:absolute;left:19px;top:530px;width:1856px;height:29px;background:#a9e0ff;"></div>
<div style="position:absolute;left:19px;top:559px;width:1856px;height:1px;background:#efefef;"></div>
<div style="position:absolute;left:1743px;top:530px;width:47px;height:29px;background:#a0cee8;"></div>
<div style="position:absolute;top:531px;height:30px;line-height:30px;font-size:16px;color:#000;white-space:pre;left:19px;width:44px;text-align:right;">1.</div>
<div style="position:absolute;top:531px;height:30px;line-height:30px;font-size:16px;color:#000;white-space:pre;left:68.5px;letter-spacing:-0.150px;">Sabo BWM OG</div>
<div style="position:absolute;left:372px;top:531px;width:215px;height:28px;box-sizing:border-box;background:#fdfdfd;border:1px solid #cfcaca;border-radius:4px;border-top-color:#d4d0d0;border-bottom-color:#b8b5b5"></div>
<div style="position:absolute;top:531px;height:30px;line-height:30px;font-size:16px;color:#000;white-space:pre;left:372px;width:215px;text-align:center;letter-spacing:0.650px;">JA-116H [12]</div>
<div style="position:absolute;top:531px;height:30px;line-height:30px;font-size:16px;color:#000;white-space:pre;left:594px;letter-spacing:0.317px;">1: Bereich 1</div>
<div style="position:absolute;top:531px;height:30px;line-height:30px;font-size:16px;color:#000;white-space:pre;left:697px;letter-spacing:0.520px;">Sofortiger Alarm - IW</div>
<div style="position:absolute;left:1155px;top:538px;width:13px;height:13px;box-sizing:border-box;background:#f3f3f3;border:1px solid #6b6b6b;border-radius:2px"></div>
<div style="position:absolute;left:1199px;top:531px;width:254px;height:28px;box-sizing:border-box;background:#fdfdfd;border:1px solid #cfcaca;border-radius:4px;border-top-color:#d4d0d0;border-bottom-color:#b8b5b5"></div>
<div style="position:absolute;top:531px;height:30px;line-height:30px;font-size:16px;color:#000;white-space:pre;left:1198px;width:254px;text-align:center;letter-spacing:0.448px;">Nein</div>
<div style="position:absolute;left:1456px;top:531px;width:285px;height:28px;box-sizing:border-box;background:#fdfdfd;border:1px solid #cfcaca;border-radius:4px;border-top-color:#d4d0d0;border-bottom-color:#b8b5b5"></div>
<div style="position:absolute;top:531px;height:30px;line-height:30px;font-size:16px;color:#000;white-space:pre;left:1455px;width:285px;text-align:center;letter-spacing:0.285px;">Anzeigen</div>
<div style="position:absolute;left:1760px;top:538px;width:13px;height:13px;background:#c3c3c3;border-radius:2.5px"></div><svg style="position:absolute;left:1760px;top:538px" width="13" height="13" viewBox="0 0 13 13"><path d="M4 6.8 L5.8 8.4 L9.2 5" stroke="#f0f0f0" stroke-width="1" fill="none"/></svg>
<div style="position:absolute;left:19px;top:560px;width:1856px;height:29px;background:#a9e0ff;"></div>
<div style="position:absolute;left:19px;top:589px;width:1856px;height:1px;background:#efefef;"></div>
<div style="position:absolute;left:1743px;top:560px;width:47px;height:29px;background:#a0cee8;"></div>
<div style="position:absolute;top:561px;height:30px;line-height:30px;font-size:16px;color:#000;white-space:pre;left:19px;width:44px;text-align:right;">1.</div>
<div style="position:absolute;top:561px;height:30px;line-height:30px;font-size:16px;color:#000;white-space:pre;left:68.5px;letter-spacing:0.097px;">Sabo GBM Wohnzimmer</div>
<div style="position:absolute;left:372px;top:561px;width:215px;height:28px;box-sizing:border-box;background:#fdfdfd;border:1px solid #cfcaca;border-radius:4px;border-top-color:#d4d0d0;border-bottom-color:#b8b5b5"></div>
<div style="position:absolute;top:561px;height:30px;line-height:30px;font-size:16px;color:#000;white-space:pre;left:372px;width:215px;text-align:center;letter-spacing:0.650px;">JA-116H [13]</div>
<div style="position:absolute;top:561px;height:30px;line-height:30px;font-size:16px;color:#000;white-space:pre;left:594px;letter-spacing:0.317px;">1: Bereich 1</div>
<div style="position:absolute;top:561px;height:30px;line-height:30px;font-size:16px;color:#000;white-space:pre;left:697px;letter-spacing:0.520px;">Sofortiger Alarm - IW</div>
<div style="position:absolute;left:1155px;top:568px;width:13px;height:13px;box-sizing:border-box;background:#f3f3f3;border:1px solid #6b6b6b;border-radius:2px"></div>
<div style="position:absolute;left:1199px;top:561px;width:254px;height:28px;box-sizing:border-box;background:#fdfdfd;border:1px solid #cfcaca;border-radius:4px;border-top-color:#d4d0d0;border-bottom-color:#b8b5b5"></div>
<div style="position:absolute;top:561px;height:30px;line-height:30px;font-size:16px;color:#000;white-space:pre;left:1198px;width:254px;text-align:center;letter-spacing:0.448px;">Nein</div>
<div style="position:absolute;left:1456px;top:561px;width:285px;height:28px;box-sizing:border-box;background:#fdfdfd;border:1px solid #cfcaca;border-radius:4px;border-top-color:#d4d0d0;border-bottom-color:#b8b5b5"></div>
<div style="position:absolute;top:561px;height:30px;line-height:30px;font-size:16px;color:#000;white-space:pre;left:1455px;width:285px;text-align:center;letter-spacing:0.285px;">Anzeigen</div>
<div style="position:absolute;left:1760px;top:568px;width:13px;height:13px;background:#c3c3c3;border-radius:2.5px"></div><svg style="position:absolute;left:1760px;top:568px" width="13" height="13" viewBox="0 0 13 13"><path d="M4 6.8 L5.8 8.4 L9.2 5" stroke="#f0f0f0" stroke-width="1" fill="none"/></svg>
<div style="position:absolute;left:19px;top:590px;width:1856px;height:29px;background:#a9e0ff;"></div>
<div style="position:absolute;left:19px;top:619px;width:1856px;height:1px;background:#efefef;"></div>
<div style="position:absolute;left:1743px;top:590px;width:47px;height:29px;background:#a0cee8;"></div>
<div style="position:absolute;top:591px;height:30px;line-height:30px;font-size:16px;color:#000;white-space:pre;left:19px;width:44px;text-align:right;">1.</div>
<div style="position:absolute;top:591px;height:30px;line-height:30px;font-size:16px;color:#000;white-space:pre;left:68.5px;letter-spacing:0.090px;">Sabo BWM Vorraum,Büro EG</div>
<div style="position:absolute;left:372px;top:591px;width:215px;height:28px;box-sizing:border-box;background:#fdfdfd;border:1px solid #cfcaca;border-radius:4px;border-top-color:#d4d0d0;border-bottom-color:#b8b5b5"></div>
<div style="position:absolute;top:591px;height:30px;line-height:30px;font-size:16px;color:#000;white-space:pre;left:372px;width:215px;text-align:center;letter-spacing:0.650px;">JA-116H [14]</div>
<div style="position:absolute;top:591px;height:30px;line-height:30px;font-size:16px;color:#000;white-space:pre;left:594px;letter-spacing:0.317px;">1: Bereich 1</div>
<div style="position:absolute;top:591px;height:30px;line-height:30px;font-size:16px;color:#000;white-space:pre;left:697px;letter-spacing:0.520px;">Sofortiger Alarm - IW</div>
<div style="position:absolute;left:1155px;top:598px;width:13px;height:13px;box-sizing:border-box;background:#f3f3f3;border:1px solid #6b6b6b;border-radius:2px"></div>
<div style="position:absolute;left:1199px;top:591px;width:254px;height:28px;box-sizing:border-box;background:#fdfdfd;border:1px solid #cfcaca;border-radius:4px;border-top-color:#d4d0d0;border-bottom-color:#b8b5b5"></div>
<div style="position:absolute;top:591px;height:30px;line-height:30px;font-size:16px;color:#000;white-space:pre;left:1198px;width:254px;text-align:center;letter-spacing:0.448px;">Nein</div>
<div style="position:absolute;left:1456px;top:591px;width:285px;height:28px;box-sizing:border-box;background:#fdfdfd;border:1px solid #cfcaca;border-radius:4px;border-top-color:#d4d0d0;border-bottom-color:#b8b5b5"></div>
<div style="position:absolute;top:591px;height:30px;line-height:30px;font-size:16px;color:#000;white-space:pre;left:1455px;width:285px;text-align:center;letter-spacing:0.285px;">Anzeigen</div>
<div style="position:absolute;left:1760px;top:598px;width:13px;height:13px;background:#c3c3c3;border-radius:2.5px"></div><svg style="position:absolute;left:1760px;top:598px" width="13" height="13" viewBox="0 0 13 13"><path d="M4 6.8 L5.8 8.4 L9.2 5" stroke="#f0f0f0" stroke-width="1" fill="none"/></svg>
<div style="position:absolute;left:19px;top:620px;width:1856px;height:29px;background:#a9e0ff;"></div>
<div style="position:absolute;left:19px;top:649px;width:1856px;height:1px;background:#efefef;"></div>
<div style="position:absolute;left:1743px;top:620px;width:47px;height:29px;background:#a0cee8;"></div>
<div style="position:absolute;top:621px;height:30px;line-height:30px;font-size:16px;color:#000;white-space:pre;left:19px;width:44px;text-align:right;">1.</div>
<div style="position:absolute;top:621px;height:30px;line-height:30px;font-size:16px;color:#000;white-space:pre;left:68.5px;letter-spacing:0.027px;">Sabo BWM Küche,WZ</div>
<div style="position:absolute;left:372px;top:621px;width:215px;height:28px;box-sizing:border-box;background:#fdfdfd;border:1px solid #cfcaca;border-radius:4px;border-top-color:#d4d0d0;border-bottom-color:#b8b5b5"></div>
<div style="position:absolute;top:621px;height:30px;line-height:30px;font-size:16px;color:#000;white-space:pre;left:372px;width:215px;text-align:center;letter-spacing:0.650px;">JA-116H [15]</div>
<div style="position:absolute;top:621px;height:30px;line-height:30px;font-size:16px;color:#000;white-space:pre;left:594px;letter-spacing:0.317px;">1: Bereich 1</div>
<div style="position:absolute;top:621px;height:30px;line-height:30px;font-size:16px;color:#000;white-space:pre;left:697px;letter-spacing:0.520px;">Sofortiger Alarm - IW</div>
<div style="position:absolute;left:1155px;top:628px;width:13px;height:13px;box-sizing:border-box;background:#f3f3f3;border:1px solid #6b6b6b;border-radius:2px"></div>
<div style="position:absolute;left:1199px;top:621px;width:254px;height:28px;box-sizing:border-box;background:#fdfdfd;border:1px solid #cfcaca;border-radius:4px;border-top-color:#d4d0d0;border-bottom-color:#b8b5b5"></div>
<div style="position:absolute;top:621px;height:30px;line-height:30px;font-size:16px;color:#000;white-space:pre;left:1198px;width:254px;text-align:center;letter-spacing:0.448px;">Nein</div>
<div style="position:absolute;left:1456px;top:621px;width:285px;height:28px;box-sizing:border-box;background:#fdfdfd;border:1px solid #cfcaca;border-radius:4px;border-top-color:#d4d0d0;border-bottom-color:#b8b5b5"></div>
<div style="position:absolute;top:621px;height:30px;line-height:30px;font-size:16px;color:#000;white-space:pre;left:1455px;width:285px;text-align:center;letter-spacing:0.285px;">Anzeigen</div>
<div style="position:absolute;left:1760px;top:628px;width:13px;height:13px;background:#c3c3c3;border-radius:2.5px"></div><svg style="position:absolute;left:1760px;top:628px" width="13" height="13" viewBox="0 0 13 13"><path d="M4 6.8 L5.8 8.4 L9.2 5" stroke="#f0f0f0" stroke-width="1" fill="none"/></svg>
<div style="position:absolute;left:19px;top:650px;width:1856px;height:29px;background:#a9e0ff;"></div>
<div style="position:absolute;left:19px;top:679px;width:1856px;height:1px;background:#efefef;"></div>
<div style="position:absolute;left:1743px;top:650px;width:47px;height:29px;background:#a0cee8;"></div>
<div style="position:absolute;top:651px;height:30px;line-height:30px;font-size:16px;color:#000;white-space:pre;left:19px;width:44px;text-align:right;">1.</div>
<div style="position:absolute;top:651px;height:30px;line-height:30px;font-size:16px;color:#000;white-space:pre;left:68.5px;letter-spacing:0.062px;">Sabo BWM Keller</div>
<div style="position:absolute;left:372px;top:651px;width:215px;height:28px;box-sizing:border-box;background:#fdfdfd;border:1px solid #cfcaca;border-radius:4px;border-top-color:#d4d0d0;border-bottom-color:#b8b5b5"></div>
<div style="position:absolute;top:651px;height:30px;line-height:30px;font-size:16px;color:#000;white-space:pre;left:372px;width:215px;text-align:center;letter-spacing:0.650px;">JA-116H [16]</div>
<div style="position:absolute;top:651px;height:30px;line-height:30px;font-size:16px;color:#000;white-space:pre;left:594px;letter-spacing:0.317px;">1: Bereich 1</div>
<div style="position:absolute;top:651px;height:30px;line-height:30px;font-size:16px;color:#000;white-space:pre;left:697px;letter-spacing:0.520px;">Sofortiger Alarm - IW</div>
<div style="position:absolute;left:1155px;top:658px;width:13px;height:13px;box-sizing:border-box;background:#f3f3f3;border:1px solid #6b6b6b;border-radius:2px"></div>
<div style="position:absolute;left:1199px;top:651px;width:254px;height:28px;box-sizing:border-box;background:#fdfdfd;border:1px solid #cfcaca;border-radius:4px;border-top-color:#d4d0d0;border-bottom-color:#b8b5b5"></div>
<div style="position:absolute;top:651px;height:30px;line-height:30px;font-size:16px;color:#000;white-space:pre;left:1198px;width:254px;text-align:center;letter-spacing:0.448px;">Nein</div>
<div style="position:absolute;left:1456px;top:651px;width:285px;height:28px;box-sizing:border-box;background:#fdfdfd;border:1px solid #cfcaca;border-radius:4px;border-top-color:#d4d0d0;border-bottom-color:#b8b5b5"></div>
<div style="position:absolute;top:651px;height:30px;line-height:30px;font-size:16px;color:#000;white-space:pre;left:1455px;width:285px;text-align:center;letter-spacing:0.285px;">Anzeigen</div>
<div style="position:absolute;left:1760px;top:658px;width:13px;height:13px;background:#c3c3c3;border-radius:2.5px"></div><svg style="position:absolute;left:1760px;top:658px" width="13" height="13" viewBox="0 0 13 13"><path d="M4 6.8 L5.8 8.4 L9.2 5" stroke="#f0f0f0" stroke-width="1" fill="none"/></svg>
<div style="position:absolute;left:19px;top:680px;width:1856px;height:29px;background:#a9e0ff;"></div>
<div style="position:absolute;left:19px;top:709px;width:1856px;height:1px;background:#efefef;"></div>
<div style="position:absolute;left:691px;top:680px;width:763px;height:29px;background:#a0cee8;"></div>
<div style="position:absolute;left:1743px;top:680px;width:47px;height:29px;background:#a0cee8;"></div>
<div style="position:absolute;top:681px;height:30px;line-height:30px;font-size:16px;color:#000;white-space:pre;left:19px;width:44px;text-align:right;">1.</div>
<div style="position:absolute;top:681px;height:30px;line-height:30px;font-size:16px;color:#000;white-space:pre;left:68.5px;letter-spacing:0.362px;">Bedienteil</div>
<div style="position:absolute;left:372px;top:681px;width:215px;height:28px;box-sizing:border-box;background:#fdfdfd;border:1px solid #cfcaca;border-radius:4px;border-top-color:#d4d0d0;border-bottom-color:#b8b5b5"></div>
<div style="position:absolute;top:681px;height:30px;line-height:30px;font-size:16px;color:#000;white-space:pre;left:372px;width:215px;text-align:center;letter-spacing:0.330px;">JA-114E</div>
<div style="position:absolute;top:681px;height:30px;line-height:30px;font-size:16px;color:#000;white-space:pre;left:594px;letter-spacing:0.317px;">1: Bereich 1</div>
<div style="position:absolute;left:1456px;top:681px;width:285px;height:28px;box-sizing:border-box;background:#fdfdfd;border:1px solid #cfcaca;border-radius:4px;border-top-color:#d4d0d0;border-bottom-color:#b8b5b5"></div>
<div style="position:absolute;top:681px;height:30px;line-height:30px;font-size:16px;color:#000;white-space:pre;left:1455px;width:285px;text-align:center;letter-spacing:0.285px;">Anzeigen</div>
<div style="position:absolute;left:1760px;top:688px;width:13px;height:13px;background:#c3c3c3;border-radius:2.5px"></div><svg style="position:absolute;left:1760px;top:688px" width="13" height="13" viewBox="0 0 13 13"><path d="M4 6.8 L5.8 8.4 L9.2 5" stroke="#f0f0f0" stroke-width="1" fill="none"/></svg>
<div style="position:absolute;left:19px;top:710px;width:1856px;height:29px;background:#a9e0ff;"></div>
<div style="position:absolute;left:19px;top:739px;width:1856px;height:1px;background:#efefef;"></div>
<div style="position:absolute;left:691px;top:710px;width:763px;height:29px;background:#a0cee8;"></div>
<div style="position:absolute;top:711px;height:30px;line-height:30px;font-size:16px;color:#000;white-space:pre;left:19px;width:44px;text-align:right;">1.</div>
<div style="position:absolute;top:711px;height:30px;line-height:30px;font-size:16px;color:#000;white-space:pre;left:68.5px;letter-spacing:0.433px;">Melder/Gerät 19</div>
<div style="position:absolute;left:372px;top:711px;width:215px;height:28px;box-sizing:border-box;background:#fdfdfd;border:1px solid #cfcaca;border-radius:4px;border-top-color:#d4d0d0;border-bottom-color:#b8b5b5"></div>
<div style="position:absolute;top:711px;height:30px;line-height:30px;font-size:16px;color:#000;white-space:pre;left:372px;width:215px;text-align:center;letter-spacing:-0.014px;">JA-154J MS</div>
<div style="position:absolute;top:711px;height:30px;line-height:30px;font-size:16px;color:#000;white-space:pre;left:594px;letter-spacing:0.317px;">1: Bereich 1</div>
<div style="position:absolute;left:1456px;top:711px;width:285px;height:28px;box-sizing:border-box;background:#fdfdfd;border:1px solid #cfcaca;border-radius:4px;border-top-color:#d4d0d0;border-bottom-color:#b8b5b5"></div>
<div style="position:absolute;top:711px;height:30px;line-height:30px;font-size:16px;color:#000;white-space:pre;left:1455px;width:285px;text-align:center;letter-spacing:0.285px;">Anzeigen</div>
<div style="position:absolute;left:1760px;top:718px;width:13px;height:13px;box-sizing:border-box;background:#fafafa;border:1px solid #cfc6c6;border-radius:2.5px"></div>
<svg style="position:absolute;left:22px;top:711px" width="26" height="23" viewBox="0 0 26 23">
<path d="M3.6 1.0 Q0.0 7 3.6 13.2" stroke="#86d494" stroke-width="1.7" fill="none"/>
<path d="M22.4 1.0 Q26.0 7 22.4 13.2" stroke="#86d494" stroke-width="1.7" fill="none"/>
<path d="M8.6 2.4 Q5.4 7 8.6 11.6" stroke="#5cc43c" stroke-width="2.3" fill="none"/>
<path d="M17.4 2.4 Q20.6 7 17.4 11.6" stroke="#5cc43c" stroke-width="2.3" fill="none"/>
<rect x="11.3" y="8" width="3.4" height="14" rx="1" fill="#a293d4"/>
<circle cx="13" cy="6.6" r="3.3" fill="#988dcd"/><circle cx="12.7" cy="6.0" r="1.5" fill="#e2d8ee"/>
</svg>
<div style="position:absolute;left:19px;top:740px;width:1856px;height:29px;background:#a9e0ff;"></div>
<div style="position:absolute;left:19px;top:769px;width:1856px;height:1px;background:#efefef;"></div>
<div style="position:absolute;left:691px;top:740px;width:763px;height:29px;background:#a0cee8;"></div>
<div style="position:absolute;top:741px;height:30px;line-height:30px;font-size:16px;color:#000;white-space:pre;left:19px;width:44px;text-align:right;">2.</div>
<div style="position:absolute;top:741px;height:30px;line-height:30px;font-size:16px;color:#000;white-space:pre;left:68.5px;letter-spacing:0.433px;">Melder/Gerät 20</div>
<div style="position:absolute;left:372px;top:741px;width:215px;height:28px;box-sizing:border-box;background:#fdfdfd;border:1px solid #cfcaca;border-radius:4px;border-top-color:#d4d0d0;border-bottom-color:#b8b5b5"></div>
<div style="position:absolute;top:741px;height:30px;line-height:30px;font-size:16px;color:#000;white-space:pre;left:372px;width:215px;text-align:center;letter-spacing:-0.014px;">JA-154J MS</div>
<div style="position:absolute;top:741px;height:30px;line-height:30px;font-size:16px;color:#000;white-space:pre;left:594px;letter-spacing:0.317px;">1: Bereich 1</div>
<div style="position:absolute;left:1456px;top:741px;width:285px;height:28px;box-sizing:border-box;background:#fdfdfd;border:1px solid #cfcaca;border-radius:4px;border-top-color:#d4d0d0;border-bottom-color:#b8b5b5"></div>
<div style="position:absolute;top:741px;height:30px;line-height:30px;font-size:16px;color:#000;white-space:pre;left:1455px;width:285px;text-align:center;letter-spacing:0.285px;">Anzeigen</div>
<div style="position:absolute;left:1760px;top:748px;width:13px;height:13px;box-sizing:border-box;background:#fafafa;border:1px solid #cfc6c6;border-radius:2.5px"></div>
<svg style="position:absolute;left:22px;top:741px" width="26" height="23" viewBox="0 0 26 23">
<path d="M3.6 1.0 Q0.0 7 3.6 13.2" stroke="#86d494" stroke-width="1.7" fill="none"/>
<path d="M22.4 1.0 Q26.0 7 22.4 13.2" stroke="#86d494" stroke-width="1.7" fill="none"/>
<path d="M8.6 2.4 Q5.4 7 8.6 11.6" stroke="#5cc43c" stroke-width="2.3" fill="none"/>
<path d="M17.4 2.4 Q20.6 7 17.4 11.6" stroke="#5cc43c" stroke-width="2.3" fill="none"/>
<rect x="11.3" y="8" width="3.4" height="14" rx="1" fill="#a293d4"/>
<circle cx="13" cy="6.6" r="3.3" fill="#988dcd"/><circle cx="12.7" cy="6.0" r="1.5" fill="#e2d8ee"/>
</svg>
<div style="position:absolute;left:19px;top:770px;width:1856px;height:29px;background:#a9e0ff;"></div>
<div style="position:absolute;left:19px;top:799px;width:1856px;height:1px;background:#efefef;"></div>
<div style="position:absolute;left:691px;top:770px;width:763px;height:29px;background:#a0cee8;"></div>
<div style="position:absolute;top:771px;height:30px;line-height:30px;font-size:16px;color:#000;white-space:pre;left:19px;width:44px;text-align:right;">2.</div>
<div style="position:absolute;top:771px;height:30px;line-height:30px;font-size:16px;color:#000;white-space:pre;left:68.5px;letter-spacing:0.433px;">Melder/Gerät 21</div>
<div style="position:absolute;left:372px;top:771px;width:215px;height:28px;box-sizing:border-box;background:#fdfdfd;border:1px solid #cfcaca;border-radius:4px;border-top-color:#d4d0d0;border-bottom-color:#b8b5b5"></div>
<div style="position:absolute;top:771px;height:30px;line-height:30px;font-size:16px;color:#000;white-space:pre;left:372px;width:215px;text-align:center;letter-spacing:-0.014px;">JA-154J MS</div>
<div style="position:absolute;top:771px;height:30px;line-height:30px;font-size:16px;color:#000;white-space:pre;left:594px;letter-spacing:0.317px;">1: Bereich 1</div>
<div style="position:absolute;left:1456px;top:771px;width:285px;height:28px;box-sizing:border-box;background:#fdfdfd;border:1px solid #cfcaca;border-radius:4px;border-top-color:#d4d0d0;border-bottom-color:#b8b5b5"></div>
<div style="position:absolute;top:771px;height:30px;line-height:30px;font-size:16px;color:#000;white-space:pre;left:1455px;width:285px;text-align:center;letter-spacing:0.285px;">Anzeigen</div>
<div style="position:absolute;left:1760px;top:778px;width:13px;height:13px;box-sizing:border-box;background:#fafafa;border:1px solid #cfc6c6;border-radius:2.5px"></div>
<svg style="position:absolute;left:22px;top:771px" width="26" height="23" viewBox="0 0 26 23">
<path d="M3.6 1.0 Q0.0 7 3.6 13.2" stroke="#86d494" stroke-width="1.7" fill="none"/>
<path d="M22.4 1.0 Q26.0 7 22.4 13.2" stroke="#86d494" stroke-width="1.7" fill="none"/>
<path d="M8.6 2.4 Q5.4 7 8.6 11.6" stroke="#5cc43c" stroke-width="2.3" fill="none"/>
<path d="M17.4 2.4 Q20.6 7 17.4 11.6" stroke="#5cc43c" stroke-width="2.3" fill="none"/>
<rect x="11.3" y="8" width="3.4" height="14" rx="1" fill="#a293d4"/>
<circle cx="13" cy="6.6" r="3.3" fill="#988dcd"/><circle cx="12.7" cy="6.0" r="1.5" fill="#e2d8ee"/>
</svg>
<div style="position:absolute;left:19px;top:800px;width:1856px;height:29px;background:#a9e0ff;"></div>
<div style="position:absolute;left:19px;top:829px;width:1856px;height:1px;background:#efefef;"></div>
<div style="position:absolute;left:691px;top:800px;width:763px;height:29px;background:#a0cee8;"></div>
<div style="position:absolute;top:801px;height:30px;line-height:30px;font-size:16px;color:#000;white-space:pre;left:19px;width:44px;text-align:right;">2.</div>
<div style="position:absolute;top:801px;height:30px;line-height:30px;font-size:16px;color:#000;white-space:pre;left:68.5px;letter-spacing:0.433px;">Melder/Gerät 22</div>
<div style="position:absolute;left:372px;top:801px;width:215px;height:28px;box-sizing:border-box;background:#fdfdfd;border:1px solid #cfcaca;border-radius:4px;border-top-color:#d4d0d0;border-bottom-color:#b8b5b5"></div>
<div style="position:absolute;top:801px;height:30px;line-height:30px;font-size:16px;color:#000;white-space:pre;left:372px;width:215px;text-align:center;letter-spacing:-0.014px;">JA-154J MS</div>
<div style="position:absolute;top:801px;height:30px;line-height:30px;font-size:16px;color:#000;white-space:pre;left:594px;letter-spacing:0.317px;">1: Bereich 1</div>
<div style="position:absolute;left:1456px;top:801px;width:285px;height:28px;box-sizing:border-box;background:#fdfdfd;border:1px solid #cfcaca;border-radius:4px;border-top-color:#d4d0d0;border-bottom-color:#b8b5b5"></div>
<div style="position:absolute;top:801px;height:30px;line-height:30px;font-size:16px;color:#000;white-space:pre;left:1455px;width:285px;text-align:center;letter-spacing:0.285px;">Anzeigen</div>
<div style="position:absolute;left:1760px;top:808px;width:13px;height:13px;box-sizing:border-box;background:#fafafa;border:1px solid #cfc6c6;border-radius:2.5px"></div>
<svg style="position:absolute;left:22px;top:801px" width="26" height="23" viewBox="0 0 26 23">
<path d="M3.6 1.0 Q0.0 7 3.6 13.2" stroke="#86d494" stroke-width="1.7" fill="none"/>
<path d="M22.4 1.0 Q26.0 7 22.4 13.2" stroke="#86d494" stroke-width="1.7" fill="none"/>
<path d="M8.6 2.4 Q5.4 7 8.6 11.6" stroke="#5cc43c" stroke-width="2.3" fill="none"/>
<path d="M17.4 2.4 Q20.6 7 17.4 11.6" stroke="#5cc43c" stroke-width="2.3" fill="none"/>
<rect x="11.3" y="8" width="3.4" height="14" rx="1" fill="#a293d4"/>
<circle cx="13" cy="6.6" r="3.3" fill="#988dcd"/><circle cx="12.7" cy="6.0" r="1.5" fill="#e2d8ee"/>
</svg>
<div style="position:absolute;left:19px;top:830px;width:1856px;height:29px;background:#a9e0ff;"></div>
<div style="position:absolute;left:19px;top:859px;width:1856px;height:1px;background:#efefef;"></div>
<div style="position:absolute;left:1127px;top:830px;width:70px;height:29px;background:#a0cee8;"></div>
<div style="position:absolute;left:1743px;top:830px;width:47px;height:29px;background:#a0cee8;"></div>
<div style="position:absolute;top:831px;height:30px;line-height:30px;font-size:16px;color:#000;white-space:pre;left:19px;width:44px;text-align:right;">2.</div>
<div style="position:absolute;top:831px;height:30px;line-height:30px;font-size:16px;color:#000;white-space:pre;left:68.5px;letter-spacing:0.433px;">Melder/Gerät 23</div>
<div style="position:absolute;left:372px;top:831px;width:215px;height:28px;box-sizing:border-box;background:#fdfdfd;border:1px solid #cfcaca;border-radius:4px;border-top-color:#d4d0d0;border-bottom-color:#b8b5b5"></div>
<div style="position:absolute;top:831px;height:30px;line-height:30px;font-size:16px;color:#000;white-space:pre;left:372px;width:215px;text-align:center;letter-spacing:0.456px;">JA-111H-AD</div>
<div style="position:absolute;top:831px;height:30px;line-height:30px;font-size:16px;color:#000;white-space:pre;left:594px;letter-spacing:0.317px;">1: Bereich 1</div>
<div style="position:absolute;top:831px;height:30px;line-height:30px;font-size:16px;color:#000;white-space:pre;left:697px;letter-spacing:0.396px;">Impulsscharfschaltung</div>
<div style="position:absolute;left:1199px;top:831px;width:254px;height:28px;box-sizing:border-box;background:#fdfdfd;border:1px solid #cfcaca;border-radius:4px;border-top-color:#d4d0d0;border-bottom-color:#b8b5b5"></div>
<div style="position:absolute;top:831px;height:30px;line-height:30px;font-size:16px;color:#000;white-space:pre;left:1198px;width:254px;text-align:center;letter-spacing:0.448px;">Nein</div>
<div style="position:absolute;left:1456px;top:831px;width:285px;height:28px;box-sizing:border-box;background:#fdfdfd;border:1px solid #cfcaca;border-radius:4px;border-top-color:#d4d0d0;border-bottom-color:#b8b5b5"></div>
<div style="position:absolute;top:831px;height:30px;line-height:30px;font-size:16px;color:#000;white-space:pre;left:1455px;width:285px;text-align:center;letter-spacing:0.285px;">Anzeigen</div>
<div style="position:absolute;left:1760px;top:838px;width:13px;height:13px;background:#c3c3c3;border-radius:2.5px"></div><svg style="position:absolute;left:1760px;top:838px" width="13" height="13" viewBox="0 0 13 13"><path d="M4 6.8 L5.8 8.4 L9.2 5" stroke="#f0f0f0" stroke-width="1" fill="none"/></svg>
<div style="position:absolute;left:63px;top:140px;width:1px;height:720px;background:#efefef;"></div>
<div style="position:absolute;left:370px;top:140px;width:1px;height:720px;background:#efefef;"></div>
<div style="position:absolute;left:588px;top:140px;width:1px;height:720px;background:#efefef;"></div>
<div style="position:absolute;left:690px;top:140px;width:1px;height:720px;background:#efefef;"></div>
<div style="position:absolute;left:1126px;top:140px;width:1px;height:720px;background:#efefef;"></div>
<div style="position:absolute;left:1197px;top:140px;width:1px;height:720px;background:#efefef;"></div>
<div style="position:absolute;left:1454px;top:140px;width:1px;height:720px;background:#efefef;"></div>
<div style="position:absolute;left:1742px;top:140px;width:1px;height:720px;background:#efefef;"></div>
<div style="position:absolute;left:1790px;top:140px;width:1px;height:720px;background:#efefef;"></div>
<div style="position:absolute;left:1875px;top:140px;width:1px;height:721px;background:#f8f8f8;"></div>
<div style="position:absolute;left:19px;top:860px;width:1857px;height:1px;background:#fafafa;"></div>
<div style="position:absolute;left:1883px;top:139px;width:11px;height:642px;background:#858585;"></div>
<div style="position:absolute;left:45px;top:868px;width:1369px;height:11px;background:#858585;"></div>
<div style="position:absolute;left:13px;top:888px;width:1886px;height:5px;background:#fcfcfc;"></div>
<div style="position:absolute;left:13px;top:890px;width:1886px;height:1px;background:#e6e6e6;"></div>
<div style="position:absolute;left:13px;top:893px;width:1886px;height:62px;background:#a9e0ff;"></div>
<div style="position:absolute;left:13px;top:893px;width:1px;height:62px;background:#fdfdfd;"></div>
<div style="position:absolute;left:13px;top:955px;width:1886px;height:1px;background:#9c9c9c;"></div>
<div style="position:absolute;left:4px;top:956px;width:1895px;height:2px;background:#bad0ea;"></div>
<div style="position:absolute;left:912px;top:903px;width:224px;height:38px;box-sizing:border-box;background:#fdfdfd;border:1px solid #d2cfcf;border-top-color:#dddbdb;border-bottom-color:#b6b2b2;border-radius:4px"></div>
<div style="position:absolute;top:909px;height:30px;line-height:30px;font-size:16px;color:#000;white-space:pre;left:912px;width:224px;text-align:center;letter-spacing:0.235px;">Funk Anmeldesignal senden</div>
<div style="position:absolute;left:1146px;top:903px;width:224px;height:38px;box-sizing:border-box;background:#fdfdfd;border:1px solid #d2cfcf;border-top-color:#dddbdb;border-bottom-color:#b6b2b2;border-radius:4px"></div>
<div style="position:absolute;top:909px;height:30px;line-height:30px;font-size:16px;color:#000;white-space:pre;left:1146px;width:224px;text-align:center;letter-spacing:0.257px;">Bus Anmeldesignal senden</div>
<div style="position:absolute;left:1452px;top:903px;width:144px;height:38px;box-sizing:border-box;background:#fdfdfd;border:1px solid #d2cfcf;border-top-color:#dddbdb;border-bottom-color:#b6b2b2;border-radius:4px"></div>
<div style="position:absolute;top:909px;height:30px;line-height:30px;font-size:16px;color:#000;white-space:pre;left:1452px;width:144px;text-align:center;letter-spacing:0.283px;">Grundeinstellung</div>
<div style="position:absolute;left:1462px;top:930px;width:11px;height:1px;background:#000;"></div>
<div style="position:absolute;left:1645px;top:903px;width:119px;height:38px;box-sizing:border-box;background:#fdfdfd;border:1px solid #0a6fd0;border-radius:5px"></div><div style="position:absolute;left:1646px;top:904px;width:117px;height:36px;box-sizing:border-box;border:1px dotted #111;border-radius:4px"></div>
<div style="position:absolute;top:909px;height:30px;line-height:30px;font-size:16px;color:#000;white-space:pre;left:1645px;width:119px;text-align:center;letter-spacing:0.106px;">Speichern</div>
<div style="position:absolute;left:1776px;top:903px;width:119px;height:38px;box-sizing:border-box;background:#fdfdfd;border:1px solid #d2cfcf;border-top-color:#dddbdb;border-bottom-color:#b6b2b2;border-radius:4px"></div>
<div style="position:absolute;top:909px;height:30px;line-height:30px;font-size:16px;color:#000;white-space:pre;left:1776px;width:119px;text-align:center;letter-spacing:0.606px;">Verwerfen</div>
</body></html>
